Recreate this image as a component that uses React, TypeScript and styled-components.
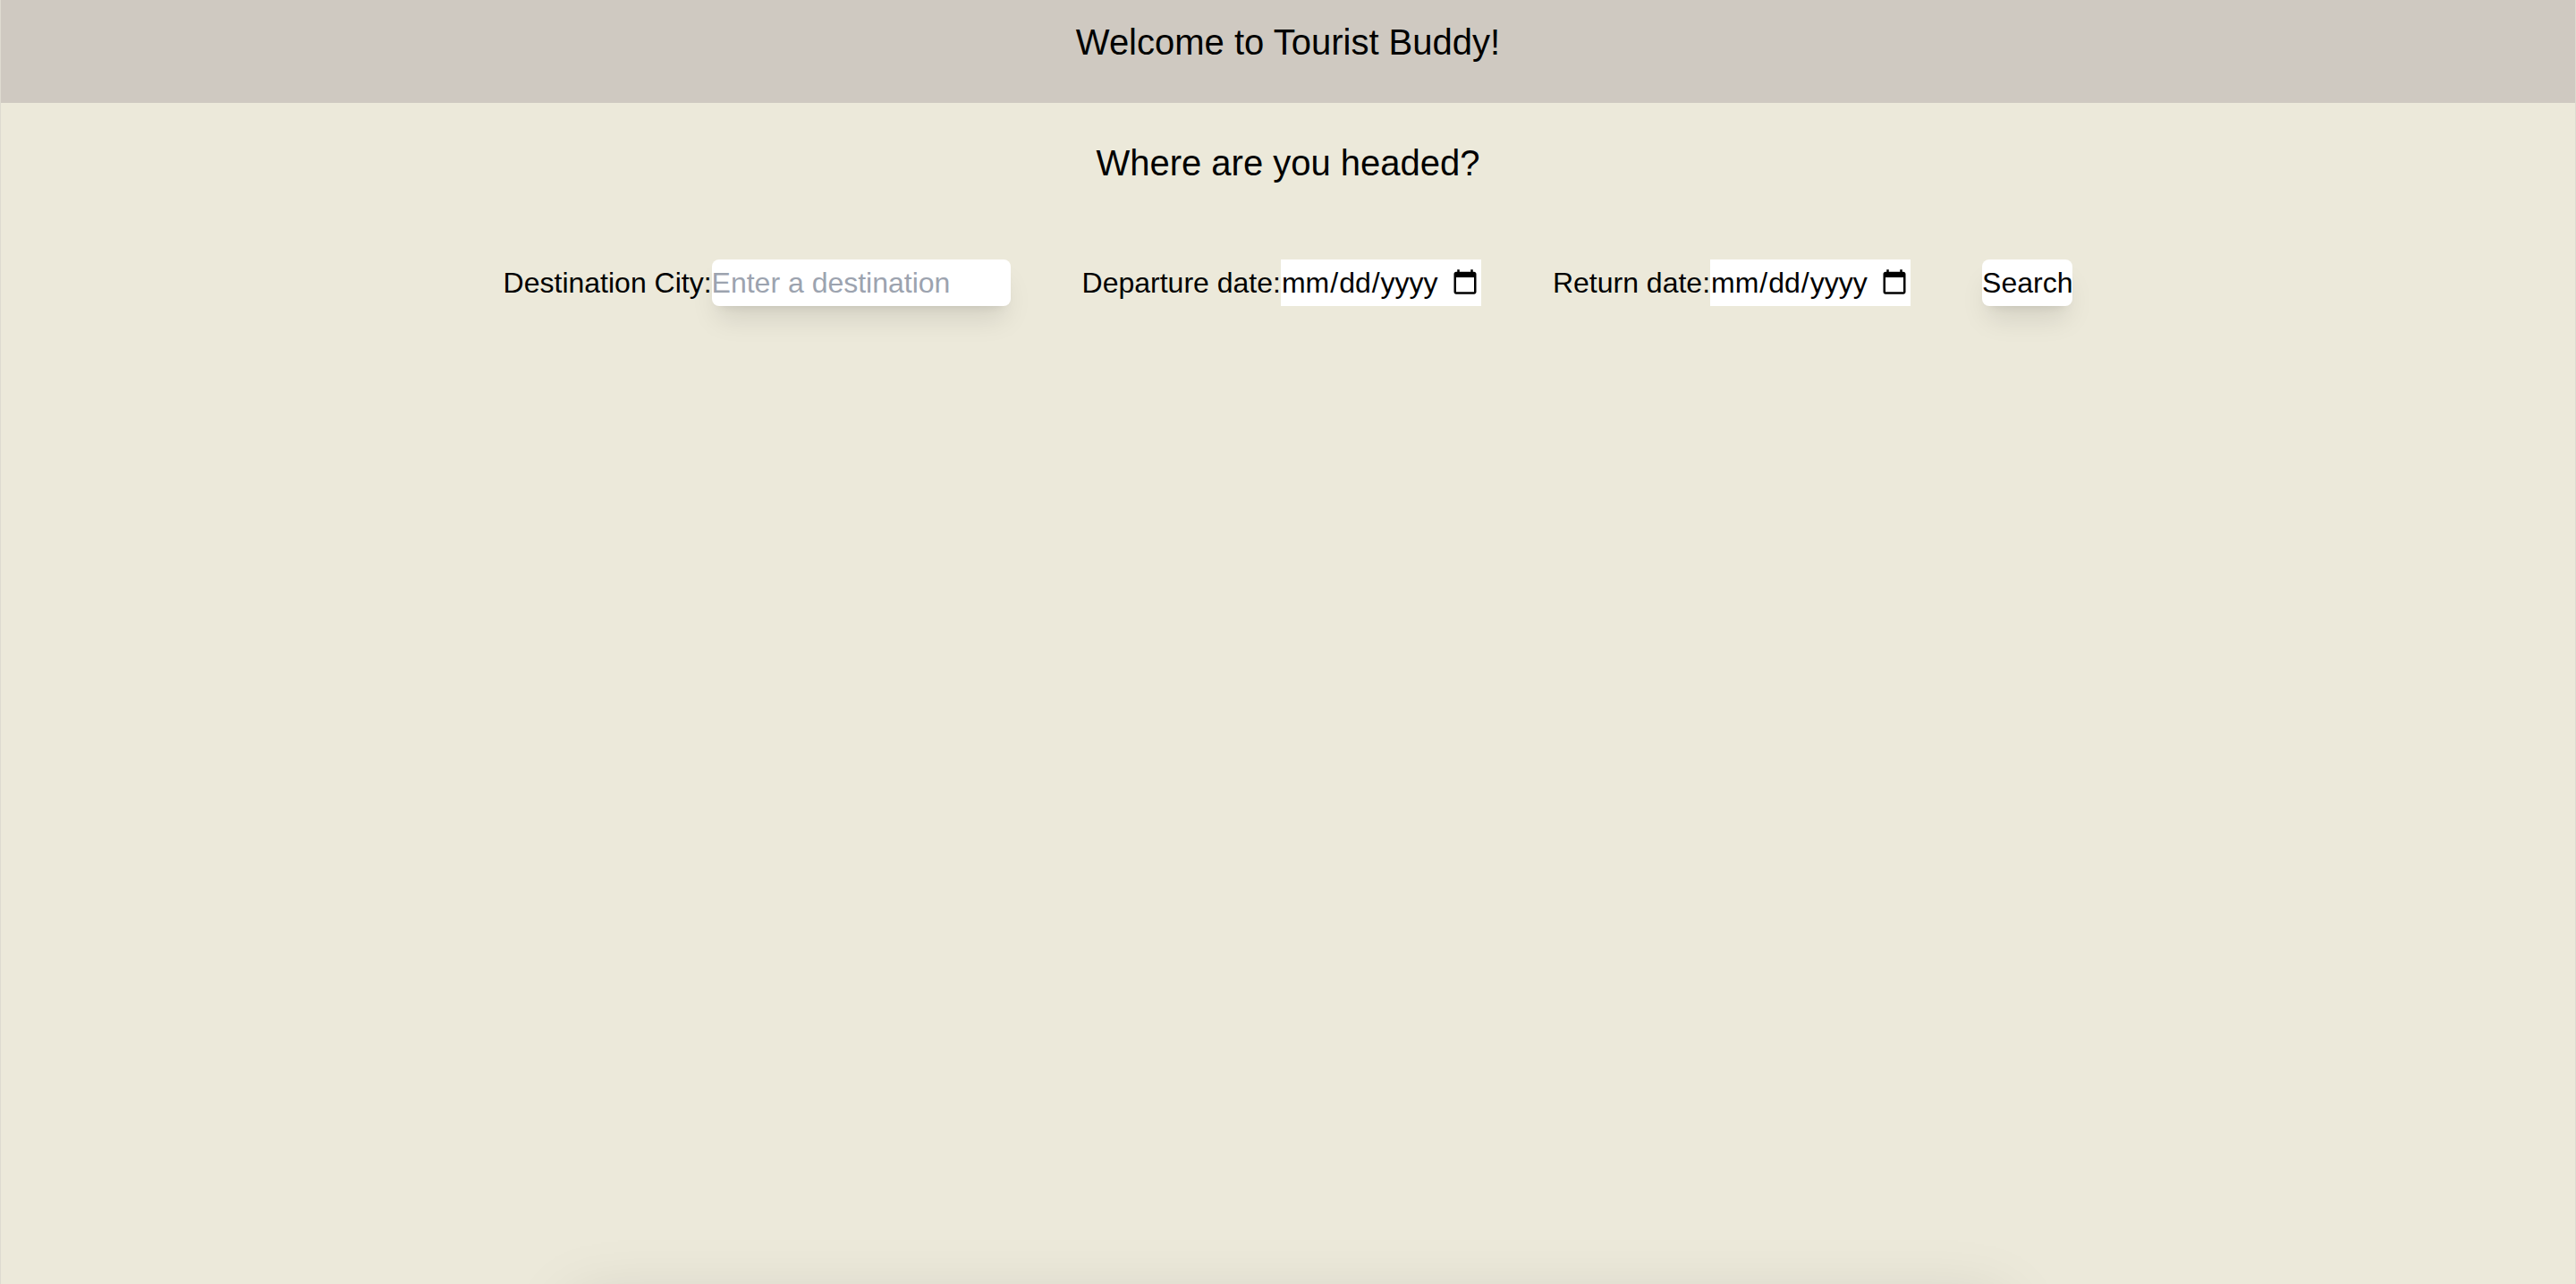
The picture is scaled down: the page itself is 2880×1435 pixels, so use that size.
import React, { useState } from "react";
import styled, { createGlobalStyle } from "styled-components";

const GlobalStyle = createGlobalStyle`
  html, body {
    margin: 0;
    padding: 0;
  }
  body {
    font-family: "Liberation Sans", Arial, Helvetica, sans-serif;
    color: #000;
    background: #ece9da;
  }
`;

const Page = styled.div`
  display: flex;
  flex-direction: column;
  height: 100vh;
  overflow: hidden;
  background: #ece9da;
  border-left: 1px solid #dedbd0;
  border-right: 1px solid #dedbd0;
  box-sizing: border-box;
`;

const Header = styled.header`
  flex-shrink: 0;
  height: 115px;
  box-sizing: border-box;
  padding-top: 25px;
  background: #cfc9c1;
  text-align: center;
`;

const Title = styled.h1`
  margin: 0;
  font-size: 40px;
  font-weight: 400;
`;

const Main = styled.main`
  flex-shrink: 0;
  min-height: calc(100vh - 95px);
  box-sizing: border-box;
  padding-top: 45px;
  display: flex;
  flex-direction: column;
  align-items: center;
`;

const Question = styled.h2`
  margin: 0;
  font-size: 40px;
  font-weight: 400;
`;

const SearchForm = styled.form`
  display: flex;
  justify-content: center;
  align-items: center;
  gap: 80px;
  margin-top: 85px;
`;

const Field = styled.div`
  display: flex;
  align-items: center;
`;

const Label = styled.label`
  font-size: 32px;
  white-space: nowrap;
`;

const TextInput = styled.input`
  width: 334px;
  height: 52px;
  box-sizing: border-box;
  padding: 0;
  border: none;
  border-radius: 8px;
  background: #fff;
  font-family: inherit;
  font-size: 32px;
  color: #000;
  outline: none;
  box-shadow: 0 20px 30px -6px rgba(0, 0, 0, 0.1), 0 8px 12px -8px rgba(0, 0, 0, 0.1);

  &::placeholder {
    color: #9ca3af;
  }
`;

const DateInput = styled.input`
  width: 224px;
  height: 52px;
  box-sizing: border-box;
  padding: 0;
  border: none;
  border-radius: 0;
  background: #fff;
  font-family: inherit;
  font-size: 32px;
  color: #000;
  outline: none;
`;

const SearchButton = styled.button`
  height: 52px;
  padding: 0;
  border: none;
  border-radius: 8px;
  background: #fff;
  font-family: inherit;
  font-size: 32px;
  color: #000;
  cursor: pointer;
  box-shadow: 0 20px 30px -6px rgba(0, 0, 0, 0.1), 0 8px 12px -8px rgba(0, 0, 0, 0.1);
`;

const Results = styled.section`
  flex-shrink: 0;
  align-self: center;
  width: 1600px;
  height: 400px;
  background: #ece9da;
  box-shadow: 0 0 70px rgba(0, 0, 0, 0.13);
`;

const App: React.FC = () => {
  const [city, setCity] = useState("");
  const [departure, setDeparture] = useState("");
  const [returnDate, setReturnDate] = useState("");

  const onSubmit = (e: React.FormEvent) => {
    e.preventDefault();
  };

  return (
    <>
      <GlobalStyle />
      <Page>
        <Header>
          <Title>Welcome to Tourist Buddy!</Title>
        </Header>
        <Main>
          <Question>Where are you headed?</Question>
          <SearchForm onSubmit={onSubmit}>
            <Field>
              <Label htmlFor="city">Destination City:</Label>
              <TextInput
                id="city"
                type="text"
                placeholder="Enter a destination"
                value={city}
                onChange={(e) => setCity(e.target.value)}
              />
            </Field>
            <Field>
              <Label htmlFor="departure">Departure date:</Label>
              <DateInput
                id="departure"
                type="date"
                value={departure}
                onChange={(e) => setDeparture(e.target.value)}
              />
            </Field>
            <Field>
              <Label htmlFor="return">Return date:</Label>
              <DateInput
                id="return"
                type="date"
                value={returnDate}
                onChange={(e) => setReturnDate(e.target.value)}
              />
            </Field>
            <SearchButton type="submit">Search</SearchButton>
          </SearchForm>
        </Main>
        <Results />
      </Page>
    </>
  );
};

export default App;
